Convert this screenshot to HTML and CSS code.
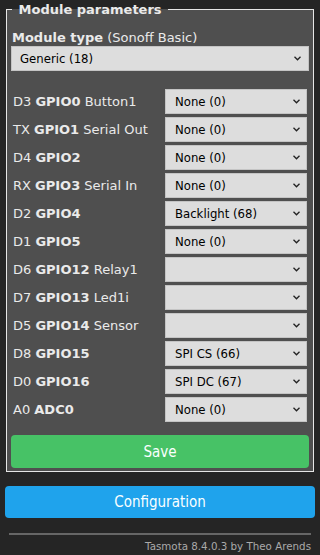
FILE: index.html
```html
<!DOCTYPE html>
<html lang="en">
<head>
  <meta charset="UTF-8" />
  <title>Tasmota - Configure Module</title>
  <link rel="stylesheet" href="styles.css">
</head>
<body>
  <div class="wrap">
    <fieldset class="panel">
      <legend><b>&nbsp;Module parameters&nbsp;</b></legend>
      <p class="mtype"><b>Module type</b> (Sonoff Basic)</p>
      <select class="wide"><option>Generic (18)</option></select>

      <div class="pins">
        <div class="pin"><span>D3 <b>GPIO0</b> Button1</span><select><option>None (0)</option></select></div>
        <div class="pin"><span>TX <b>GPIO1</b> Serial Out</span><select><option>None (0)</option></select></div>
        <div class="pin"><span>D4 <b>GPIO2</b></span><select><option>None (0)</option></select></div>
        <div class="pin"><span>RX <b>GPIO3</b> Serial In</span><select><option>None (0)</option></select></div>
        <div class="pin"><span>D2 <b>GPIO4</b></span><select><option>Backlight (68)</option></select></div>
        <div class="pin"><span>D1 <b>GPIO5</b></span><select><option>None (0)</option></select></div>
        <div class="pin"><span>D6 <b>GPIO12</b> Relay1</span><select><option></option></select></div>
        <div class="pin"><span>D7 <b>GPIO13</b> Led1i</span><select><option></option></select></div>
        <div class="pin"><span>D5 <b>GPIO14</b> Sensor</span><select><option></option></select></div>
        <div class="pin"><span>D8 <b>GPIO15</b></span><select><option>SPI CS (66)</option></select></div>
        <div class="pin"><span>D0 <b>GPIO16</b></span><select><option>SPI DC (67)</option></select></div>
        <div class="pin"><span>A0 <b>ADC0</b></span><select><option>None (0)</option></select></div>
      </div>

      <button class="btn save">Save</button>
    </fieldset>

    <button class="btn">Configuration</button>

    <hr>
    <div class="foot">Tasmota 8.4.0.3 by Theo Arends</div>
  </div>
</body>
</html>
```

FILE: styles.css
```css
body {
  margin: 0;
  background: #252525;
  color: #eaeaea;
  font-family: "DejaVu Sans", Verdana, sans-serif;
  font-size: 13px;
}

.wrap {
  padding: 2px 5px 0;
}

.panel {
  margin: 0 1px;
  padding: 0 4px 3px;
  background: #4f4f4f;
  border: 1px solid #e6e6e6;
}

legend {
  line-height: 15px;
  padding: 0 2px;
  margin-left: 1px;
}

.mtype {
  margin: 13px 1px 1px;
  line-height: 15px;
}

select {
  appearance: none;
  -webkit-appearance: none;
  background: #dddddd url("data:image/svg+xml,%3Csvg xmlns='http://www.w3.org/2000/svg' width='7' height='5'%3E%3Cpath d='M0.5 0.8L3.5 3.8L6.5 0.8' fill='none' stroke='%23222' stroke-width='1.3'/%3E%3C/svg%3E") no-repeat right 6px center;
  color: #000;
  border: 1px solid #c4c4c4;
  border-radius: 0;
  font-family: "DejaVu Sans", Verdana, sans-serif;
  font-stretch: condensed;
  font-size: 13px;
  height: 25px;
  padding: 0 0 0 9px;
}

.wide {
  display: block;
  width: 100%;
  padding-left: 8px;
  background-position: right 7px center;
}

.pins {
  margin-top: 16px;
}

.pin {
  display: flex;
  align-items: center;
  height: 28px;
}

.pin span {
  flex: 1;
  padding-left: 2px;
}

.pin select {
  width: 142px;
  margin-right: 2px;
}

.btn {
  display: block;
  width: 100%;
  height: 33px;
  border: 0;
  border-radius: 4px;
  background: #1fa3ec;
  color: #faffff;
  font-family: "DejaVu Sans", Verdana, sans-serif;
  font-stretch: condensed;
  font-size: 15px;
}

.save {
  background: #47c266;
  margin-top: 12px;
}

.wrap > .btn {
  margin-top: 14px;
  height: 32px;
}

hr {
  margin: 15px 4px 0;
  border: 0;
  border-top: 2px solid #666;
}

.foot {
  text-align: right;
  font-size: 10.3px;
  color: #aaa;
  padding: 5px 4px 0;
}
```
